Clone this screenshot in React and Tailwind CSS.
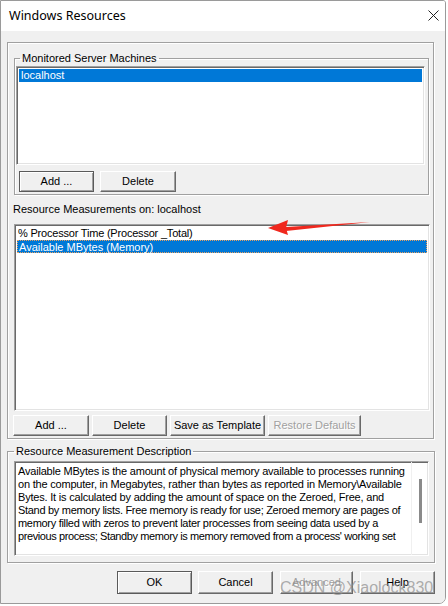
import React from 'react';

const font = { fontFamily: '"Liberation Sans", Arial, sans-serif' };

function Btn({ w, h = 'h-[21px]', disabled, focused, children }) {
    const edge = focused
        ? 'border border-[#5a5a5a] shadow-[inset_1px_1px_0_#fff,inset_-1px_-1px_0_#a0a0a0]'
        : 'border-t border-l border-b border-r border-t-white border-l-white border-b-[#696969] border-r-[#696969] shadow-[inset_-1px_-1px_0_#a0a0a0]';
    return (
        <div className={`${w} ${h} ${edge} bg-[#f0f0f0] flex items-center justify-center text-[11px] leading-none shrink-0 ${disabled ? 'text-[#a0a0a0] [text-shadow:1px_1px_0_#fff]' : 'text-black'}`}>
            {children}
        </div>
    );
}

function Sunken({ className, children }) {
    return (
        <div className={`${className} bg-white border border-t-[#a0a0a0] border-l-[#a0a0a0] border-r-white border-b-white shadow-[inset_1px_1px_0_#696969,inset_-1px_-1px_0_#e3e3e3]`}>
            {children}
        </div>
    );
}

// text, letter-spacing class per line so the wraps fit like the original
const descLines = [
    ['Available MBytes is the amount of physical memory available to processes running', 'tracking-[-0.2px]'],
    ['on the computer, in Megabytes, rather than bytes as reported in Memory\\Available', 'tracking-[-0.2px]'],
    ['Bytes. It is calculated by adding the amount of space on the Zeroed, Free, and', 'tracking-[-0.2px]'],
    ['Stand by memory lists. Free memory is ready for use; Zeroed memory are pages of', 'tracking-[-0.3px]'],
    ['memory filled with zeros to prevent later processes from seeing data used by a', 'tracking-[-0.3px]'],
    ["previous process; Standby memory is memory removed from a process' working set", 'tracking-[-0.4px]'],
];

export default function App() {
    return (
        <div className="w-[448px] h-[606px] bg-white relative overflow-hidden" style={font}>
            <div className="w-[446px] h-[604px] border border-[#9a9a9a] rounded-br-[7px] rounded-tr-[3px] overflow-hidden flex flex-col">
                {/* title bar */}
                <div className="h-[30px] bg-white flex items-center justify-between pl-[8px] pr-[6px] shrink-0">
                    <span className="text-[12.5px] text-black" style={{ fontFamily: '"Noto Sans", "Liberation Sans", sans-serif' }}>Windows Resources</span>
                    <svg width="11" height="11" viewBox="0 0 11 11" className="mb-[1px]">
                        <path d="M0.5 0.5 L10.5 10.5 M10.5 0.5 L0.5 10.5" stroke="#222" strokeWidth="1" fill="none" />
                    </svg>
                </div>

                <div className="flex-1 bg-[#f0f0f0] pl-[6px] pt-[11px]">
                    {/* outer frame */}
                    <div className="w-[427px] h-[397px] border border-[#a0a0a0] shadow-[inset_1px_1px_0_#fff,1px_1px_0_#fff] pl-[5px] pt-[9px]">
                        <fieldset className="w-[415px] h-[143px] border border-[#a0a0a0] shadow-[inset_1px_1px_0_#fff,1px_1px_0_#fff] ml-[1px]">
                            <legend className="ml-[5px] px-[2px] text-[11px] leading-[13px] text-black">Monitored Server Machines</legend>
                            <Sunken className="ml-[1px] mt-[1px] w-[409px] h-[99px] p-[2px]">
                                <div className="h-[13px] bg-[#0078d7] text-white text-[11px] leading-[13px] pl-[2px]">localhost</div>
                            </Sunken>
                            <div className="flex gap-[6px] mt-[6px] ml-[4px]">
                                <Btn w="w-[75px]" focused>Add ...</Btn>
                                <Btn w="w-[76px]">Delete</Btn>
                            </div>
                        </fieldset>

                        <div className="mt-[8px] text-[11px] leading-[13px] text-black">Resource Measurements on: localhost</div>

                        <Sunken className="ml-[1px] mt-[8px] w-[416px] h-[187px] p-[2px]">
                            <div className="h-[13px] text-black text-[11px] leading-[13px] pl-[1px] tracking-[-0.2px]">% Processor Time (Processor _Total)</div>
                            <div className="h-[13px] bg-[#0078d7] text-white text-[11px] leading-[12px] pl-[1px] border border-dotted border-[#e8a060]">Available MBytes (Memory)</div>
                        </Sunken>

                        <div className="flex gap-[3px] mt-[4px]">
                            <Btn w="w-[76px]">Add ...</Btn>
                            <Btn w="w-[75px]">Delete</Btn>
                            <Btn w="w-[95px]">Save as Template</Btn>
                            <Btn w="w-[93px]" disabled>Restore Defaults</Btn>
                        </div>
                    </div>

                    {/* description */}
                    <fieldset className="mt-[6px] w-[428px] h-[118px] border border-[#a0a0a0] shadow-[inset_1px_1px_0_#fff,1px_1px_0_#fff]">
                        <legend className="ml-[6px] px-[2px] text-[11px] leading-[13px] text-black">Resource Measurement Description</legend>
                        <Sunken className="ml-[6px] mt-[3px] w-[415px] h-[95px] flex">
                            <div className="flex-1 min-w-0 overflow-hidden pl-[3px] pt-[3px] text-[11px] leading-[13px] text-black whitespace-nowrap">
                                {descLines.map(([l, t], i) => (
                                    <div key={i} className={t}>{l}</div>
                                ))}
                            </div>
                            <div className="w-[17px] shrink-0 border-l border-[#f0f0f0] flex justify-center pt-[17px]">
                                <div className="w-[3px] h-[44px] bg-[#8a8a8a] ml-[1px]" />
                            </div>
                        </Sunken>
                    </fieldset>

                    <div className="flex justify-end mt-[8px] pr-[10px]">
                        <Btn w="w-[75px]" h="h-[23px]" focused>OK</Btn>
                        <div className="w-[6px]" />
                        <Btn w="w-[75px]" h="h-[23px]">Cancel</Btn>
                        <div className="w-[7px]" />
                        <Btn w="w-[73px]" h="h-[23px]" disabled>Advanced</Btn>
                        <div className="w-[7px]" />
                        <Btn w="w-[75px]" h="h-[23px]">Help</Btn>
                    </div>
                </div>
            </div>

            {/* red annotation arrow */}
            <svg className="absolute left-[266px] top-[218px]" width="108" height="20" viewBox="0 0 108 20">
                <path d="M104 4 L20 9 L20 13 Z" fill="#f0281e" />
                <path d="M2 10 L22 2 L20 10 L22 17 Z" fill="#f0281e" />
            </svg>

            {/* watermark */}
            <div className="absolute left-[280px] top-[580px] text-[16px] leading-none text-[#8c8c8c]/70 whitespace-nowrap" style={{ fontFamily: '"Liberation Sans", Arial, sans-serif' }}>
                CSDN @Xiaolock830
            </div>
        </div>
    );
}
